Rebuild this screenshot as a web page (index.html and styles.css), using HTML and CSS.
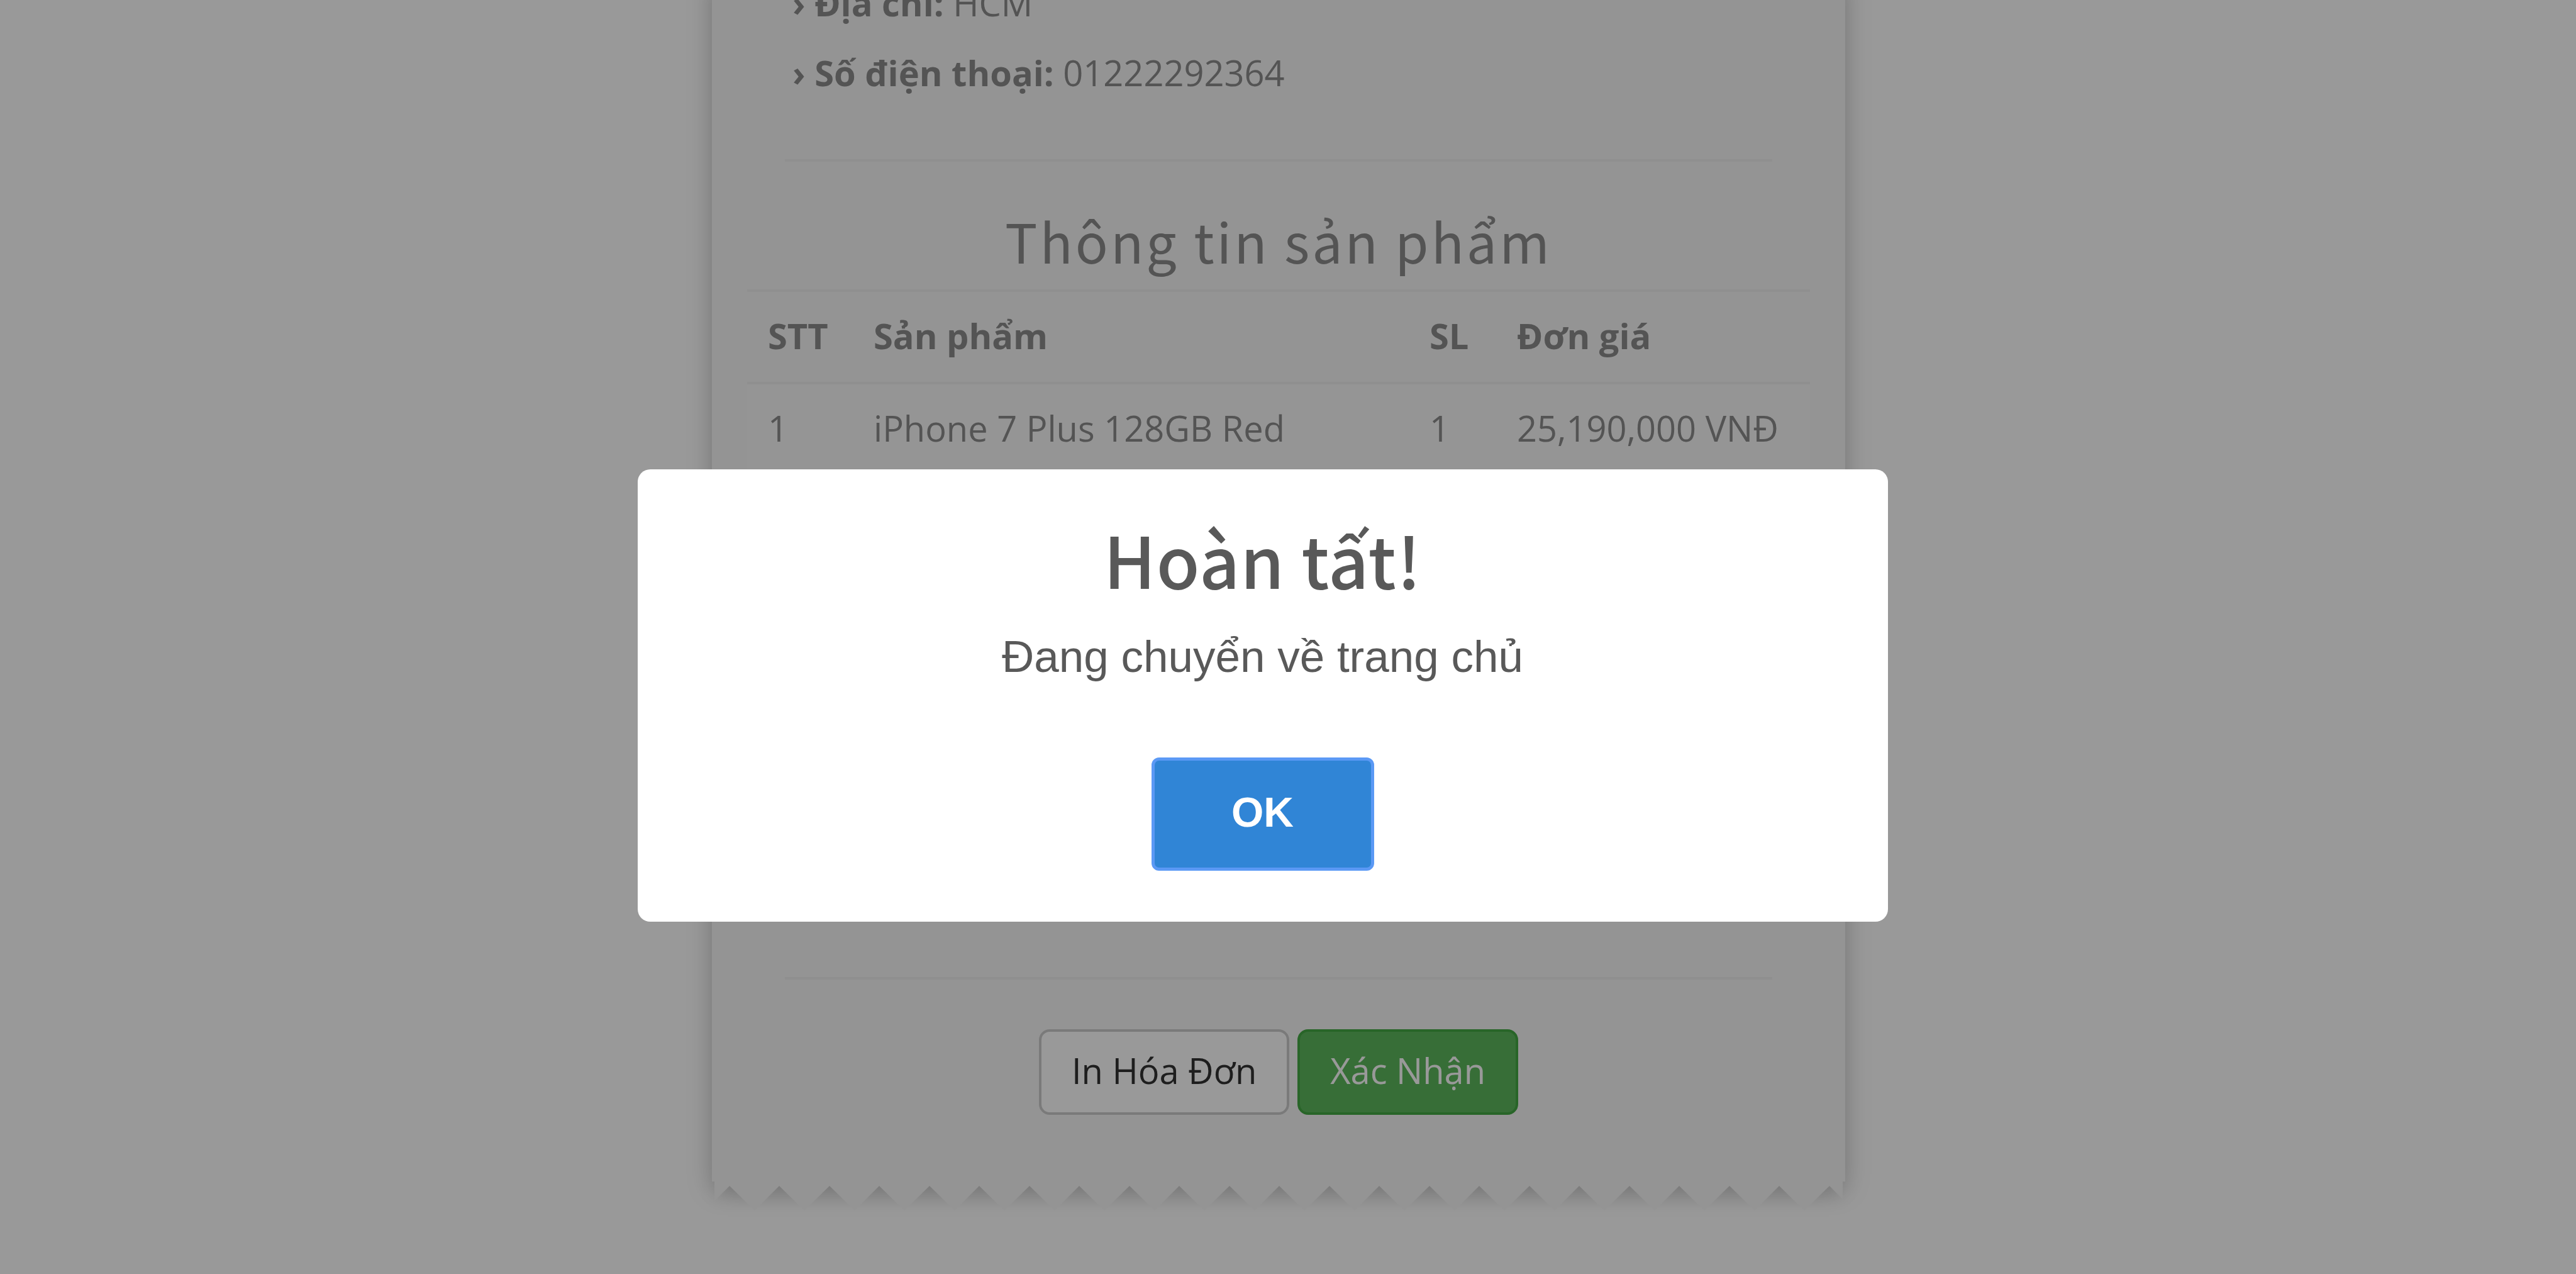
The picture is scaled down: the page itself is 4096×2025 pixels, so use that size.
FILE: index.html
```html
<!DOCTYPE html>
<html lang="vi">
<head>
<meta charset="utf-8">
<title>Hóa đơn</title>
<link rel="stylesheet" href="styles.css">
</head>
<body>
<main class="page">
  <section class="receipt">
    <ul class="customer">
      <li><strong>› Địa chỉ:</strong> HCM</li>
      <li><strong>› Số điện thoại:</strong> 01222292364</li>
    </ul>
    <hr class="divider">
    <h3 class="section-title">Thông tin sản phẩm</h3>
    <table class="products">
      <thead>
        <tr><th class="col-index">STT</th><th class="col-name">Sản phẩm</th><th class="col-qty">SL</th><th>Đơn giá</th></tr>
      </thead>
      <tbody>
        <tr><td>1</td><td>iPhone 7 Plus 128GB Red</td><td>1</td><td>25,190,000 VNĐ</td></tr>
      </tbody>
    </table>
    <hr class="divider">
    <div class="actions">
      <button type="button" class="btn btn-default">In Hóa Đơn</button>
      <button type="button" class="btn btn-success">Xác Nhận</button>
    </div>
    <svg class="torn-edge" viewBox="0 0 1794 46" preserveAspectRatio="none" aria-hidden="true">
      <path d="M0 0H1794V28L1773 7l-40 39-40-39-39 39-40-39-40 39-40-39-39 39-40-39-40 39-40-39-39 39-40-39-40 39-40-39-39 39-40-39-40 39-40-39-39 39-40-39-40 39-40-39-39 39-40-39-40 39-40-39-39 39-40-39-40 39-40-39-39 39-40-39-40 39-40-39-39 39-40-39-40 39-40-39-39 39-40-39-40 39-40-39-39 39-40-39L0 31Z"/>
    </svg>
  </section>
</main>
<div class="overlay">
  <div class="modal" role="dialog" aria-modal="true" aria-labelledby="modal-title">
    <h2 class="modal-title" id="modal-title">Hoàn tất!</h2>
    <p class="modal-text">Đang chuyển về trang chủ</p>
    <button type="button" class="modal-confirm">OK</button>
  </div>
</div>
</body>
</html>
```
FILE: styles.css
```css
* {
  box-sizing: border-box;
}

body {
  margin: 0;
  height: 100vh;
  overflow: hidden;
  background: #fff;
  color: #8c8c8c;
  font: 56px/79px "Open Sans", sans-serif;
}

.page {
  display: flex;
  justify-content: center;
  padding-right: 30px;
}

.receipt {
  display: flex;
  flex-direction: column;
  width: 1802px;
  max-width: 100%;
  margin-top: -51px;
  background: #f7f7f7;
  box-shadow: 0 14px 40px rgba(0, 0, 0, 0.18), 0 28px 32px -8px rgba(0, 0, 0, 0.12);
}

.customer {
  margin: 0;
  padding: 0 128px;
  list-style: none;
  line-height: 111px;
}

.divider {
  width: auto;
  margin: 82px 116px 65px;
  border: 0;
  border-top: 4px solid #eee;
}

.section-title {
  margin: 0 0 18px;
  font: 400 86px/120px "Noto Sans CJK JP", sans-serif;
  letter-spacing: 4px;
  text-align: center;
}

.products {
  margin: 0 56px 717px;
  border-collapse: separate;
  border-spacing: 0;
  table-layout: fixed;
  text-align: left;
}

.products th,
.products td {
  padding: 30px 0 34px 33px;
  border-top: 4px solid #eee;
}

.products tbody {
  background: #f9f9f9;
}

.col-index {
  width: 168px;
}

.col-name {
  width: 884px;
}

.col-qty {
  width: 139px;
}

.actions {
  display: flex;
  justify-content: center;
  gap: 13px;
  padding: 14px 0 106px;
}

.btn {
  height: 136px;
  padding: 0 48px 6px;
  border: 4px solid;
  border-radius: 17px;
  font: inherit;
}

.btn-default {
  background: #fff;
  border-color: #ccc;
  color: #333;
}

.btn-success {
  background: #5cb85c;
  border-color: #43a843;
  color: #fff;
}

.torn-edge {
  display: block;
  height: 46px;
  margin: 0 4px -46px;
  fill: #f7f7f7;
}

.overlay {
  position: fixed;
  inset: 0;
  display: flex;
  align-items: center;
  justify-content: center;
  padding: 186px 81px 0 0;
  background: rgba(0, 0, 0, 0.4);
}

.modal {
  display: flex;
  flex-direction: column;
  align-items: center;
  width: 1988px;
  max-width: 100%;
  padding: 66px 80px 81px;
  border-radius: 20px;
  background: #fff;
  color: #595959;
  font-family: "Liberation Sans", Arial, sans-serif;
}

.modal-title {
  margin: 0;
  font: 500 112px/150px "Noto Sans CJK JP", sans-serif;
  letter-spacing: 1px;
}

.modal-text {
  margin: 32px 0 110px;
  font-size: 71px;
  line-height: 100px;
}

.modal-confirm {
  width: 354px;
  height: 180px;
  padding: 0 0 6px;
  border: 5px solid #5b99f5;
  border-radius: 12px;
  background: #3085d6;
  color: #fff;
  font: 700 66px/80px "Liberation Sans", Arial, sans-serif;
}
```
